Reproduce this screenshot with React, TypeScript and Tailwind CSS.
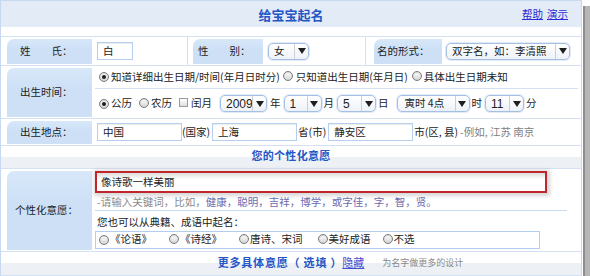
import type { ReactNode } from 'react'

const Radio = ({ on = false }: { on?: boolean }): React.JSX.Element => (
  <span className="inline-flex h-[10px] w-[10px] shrink-0 items-center justify-center rounded-full border border-[#7b7b7b] bg-[linear-gradient(#ffffff,#d4d4d4)] shadow-[inset_0_1px_1px_rgba(0,0,0,0.15)]">
    {on && <span className="h-[4px] w-[4px] rounded-full bg-[#1e1e1e]" />}
  </span>
)

const Check = (): React.JSX.Element => (
  <span className="inline-block h-[9px] w-[9px] shrink-0 border border-[#9a9a9a] bg-[linear-gradient(#ffffff,#dedede)]" />
)

const Arrow = (): React.JSX.Element => (
  <svg width="8" height="6" viewBox="0 0 8 6" aria-hidden="true">
    <polygon points="0,0 8,0 4,6" fill="#1f1f1f" />
  </svg>
)

const Select = ({ value, className, text = '' }: { value: string; className: string; text?: string }): React.JSX.Element => (
  <div
    className={`flex h-[17px] shrink-0 items-stretch rounded-[5px] border border-[#a3bfe2] bg-[linear-gradient(#ffffff,#eef2f8)] shadow-[0_0_0_1px_#e2ebf7] ${className}`}
  >
    <span className={`flex flex-1 items-center overflow-hidden whitespace-nowrap pl-[5px] ${text}`}>{value}</span>
    <span className="flex w-[14px] items-center justify-center border-l border-[#cfcfcf]">
      <Arrow />
    </span>
  </div>
)

const Input = ({ value, className }: { value: string; className: string }): React.JSX.Element => (
  <div
    className={`flex h-[18px] shrink-0 items-center border border-[#b7cfee] bg-white pl-[5px] shadow-[inset_0_1px_1px_rgba(0,0,0,0.08)] ${className}`}
  >
    {value}
  </div>
)

const LabelCell = ({ children, className, inner }: { children: ReactNode; className: string; inner: string }): React.JSX.Element => (
  <div className={`flex shrink-0 pb-[1px] pt-[2px] ${className}`}>
    <div className={`flex flex-1 items-center rounded-tl-[7px] bg-[linear-gradient(#d8e8f9,#cde0f6_40%)] ${inner}`}>
      {children}
    </div>
  </div>
)

export default function App(): React.JSX.Element {
  return (
    <div className="flex h-[276px] w-[590px] overflow-hidden bg-white font-['Noto_Sans_CJK_SC','Noto_Sans',sans-serif] text-[10.5px] leading-none text-[#222]">
      <div className="flex w-[582px] shrink-0 flex-col border-x border-[#c6d9f1]">
        {/* Header */}
        <div className="grid h-[27px] grid-cols-[1fr_auto_1fr] items-center border-t border-[#c6d9f1] bg-[#e3ebf6]">
          <span />
          <span className="text-[13px] font-bold text-[#2456c6]">给宝宝起名</span>
          <div className="flex justify-end gap-[4px] pr-[13px] text-[10.5px] text-[#2a2ad6]">
            <a className="underline">帮助</a>
            <a className="underline">演示</a>
          </div>
        </div>
        <div className="h-[9px]" />

        {/* 姓氏 / 性别 / 名的形式 */}
        <div className="flex h-[29px] border-t border-[#d3e1f2]">
          <LabelCell className="w-[91px] pl-[6px]" inner="pl-[13px]">姓　　氏：</LabelCell>
          <div className="flex w-[96px] items-center border-r border-[#d3e1f2] pl-[5px]">
            <Input value="白" className="w-[36px]" />
          </div>
          <LabelCell className="w-[75px] pl-[5px]" inner="pl-[5px]">性　　别：</LabelCell>
          <div className="flex w-[103px] items-center border-r border-[#d3e1f2] pl-[5px]">
            <Select value="女" className="w-[41px]" />
          </div>
          <LabelCell className="w-[76px] pl-[8px]" inner="pl-[3px]">名的形式：</LabelCell>
          <div className="flex flex-1 items-center pl-[4px]">
            <Select value="双字名，如：李清照" className="w-[124px]" />
          </div>
        </div>

        {/* 出生时间 */}
        <div className="flex h-[53px] border-t border-[#d3e1f2]">
          <LabelCell className="w-[91px] pl-[6px]" inner="pl-[13px]">出生时间：</LabelCell>
          <div className="ml-[3px] mr-[3px] flex flex-1 flex-col">
            <div className="flex h-[23px] items-center border-b border-[#d3e1f2] pl-[4px]">
              <Radio on />
              <span className="ml-[2px]">知道详细出生日期/时间(年月日时分)</span>
              <span className="ml-[3px]"><Radio /></span>
              <span className="ml-[3px]">只知道出生日期(年月日)</span>
              <span className="ml-[4px]"><Radio /></span>
              <span className="ml-[2px]">具体出生日期未知</span>
            </div>
            <div className="flex flex-1 items-center pl-[4px]">
              <Radio on />
              <span className="ml-[2px]">公历</span>
              <span className="ml-[7px]"><Radio /></span>
              <span className="ml-[2px]">农历</span>
              <span className="ml-[7px]"><Check /></span>
              <span className="ml-[3px]">闰月</span>
              <Select value="2009" className="ml-[8px] w-[47px]" text="font-['Liberation_Sans',sans-serif] text-[12px]" />
              <span className="ml-[3px]">年</span>
              <Select value="1" className="ml-[3px] w-[38px]" text="font-['Liberation_Sans',sans-serif] text-[12px]" />
              <span className="ml-[2px]">月</span>
              <Select value="5" className="ml-[3px] w-[39px]" text="font-['Liberation_Sans',sans-serif] text-[12px]" />
              <span className="ml-[2px]">日</span>
              <Select value="寅时 4点" className="ml-[8px] w-[73px]" text="pl-[7px]" />
              <span className="ml-[2px]">时</span>
              <Select value="11" className="ml-[3px] w-[39px]" text="font-['Liberation_Sans',sans-serif] text-[12px]" />
              <span className="ml-[2px]">分</span>
            </div>
          </div>
        </div>

        {/* 出生地点 */}
        <div className="flex h-[27px] border-t border-[#d3e1f2]">
          <LabelCell className="w-[91px] pl-[6px]" inner="pl-[13px]">出生地点：</LabelCell>
          <div className="flex flex-1 items-center pl-[5px]">
            <Input value="中国" className="w-[85px]" />
            <span>(国家)</span>
            <Input value="上海" className="ml-[2px] w-[85px]" />
            <span className="ml-[1px]">省(市)</span>
            <Input value="静安区" className="ml-[2px] w-[85px]" />
            <span className="ml-[1px]">市(区, 县)</span>
            <span className="ml-[2px] text-[#808080]">-例如, 江苏 南京</span>
          </div>
        </div>

        {/* Section title */}
        <div className="flex h-[23px] items-start justify-center border-t border-[#d3e1f2] bg-[linear-gradient(#ffffff_50%,#edf0f5_50%)] pt-[4px]">
          <span className="text-[11px] font-bold tracking-[0.3px] text-[#2456c6]">您的个性化意愿</span>
        </div>

        {/* 个性化意愿 */}
        <div className="flex h-[83px] border-t border-[#d3e1f2]">
          <LabelCell className="w-[91px] pl-[6px]" inner="pl-[8px]">个性化意愿：</LabelCell>
          <div className="flex flex-1 flex-col pl-[3px] pr-[14px]">
            <div className="mt-[2px] flex h-[22px] w-[452px] items-center border-2 border-[#c0272d] bg-[linear-gradient(#dcdcdc,#ffffff_35%)] pl-[4px] shadow-[1px_1px_4px_2px_rgba(0,0,0,0.16)]">
              像诗歌一样美丽
            </div>
            <div className="mt-[2px] h-[16px] border-b border-[#c9dbf1] pl-[2px] pt-[2px] text-[#8a8a8a]">
              -请输入关键词，比如，<span className="text-[#6c6cb0]">健康，聪明，吉祥，博学，或字佳，字，智，贤。</span>
            </div>
            <div className="pl-[2px] pt-[6px]">您也可以从典籍、成语中起名：</div>
            <div className="mt-[3px] flex h-[18px] w-[445px] items-center border border-[#b3cdee] pl-[3px]">
              <Radio />
              <span className="ml-[1px]">《论语》</span>
              <span className="ml-[17px]"><Radio /></span>
              <span className="ml-[1px]">《诗经》</span>
              <span className="ml-[17px]"><Radio /></span>
              <span className="ml-[1px]">唐诗、宋词</span>
              <span className="ml-[15px]"><Radio /></span>
              <span className="ml-[1px]">美好成语</span>
              <span className="ml-[12px]"><Radio /></span>
              <span className="ml-[1px]">不选</span>
            </div>
          </div>
        </div>

        {/* More */}
        <div className="grid h-[25px] grid-cols-[1fr_auto_1fr] border-y border-[#d3e1f2] bg-[linear-gradient(#ffffff_48%,#edf0f5_48%)] pt-[5px]">
          <span />
          <div className="flex items-start text-[11px]">
            <span className="font-bold tracking-[0.8px] text-[#2456c6]">更多具体意愿（ 选填 ）</span>
            <a className="text-[#4a4ad0] underline">隐藏</a>
          </div>
          <span className="pl-[18px] pt-[1px] text-[9px] text-[#8a8a8a]">为名字做更多的设计</span>
        </div>
      </div>
      <div className="w-[1px] shrink-0 bg-white" />
      <div className="mt-[6px] w-[7px] shrink-0 border-l-2 border-[#8d8d8d] bg-[#b6b6b6]" />
    </div>
  )
}
